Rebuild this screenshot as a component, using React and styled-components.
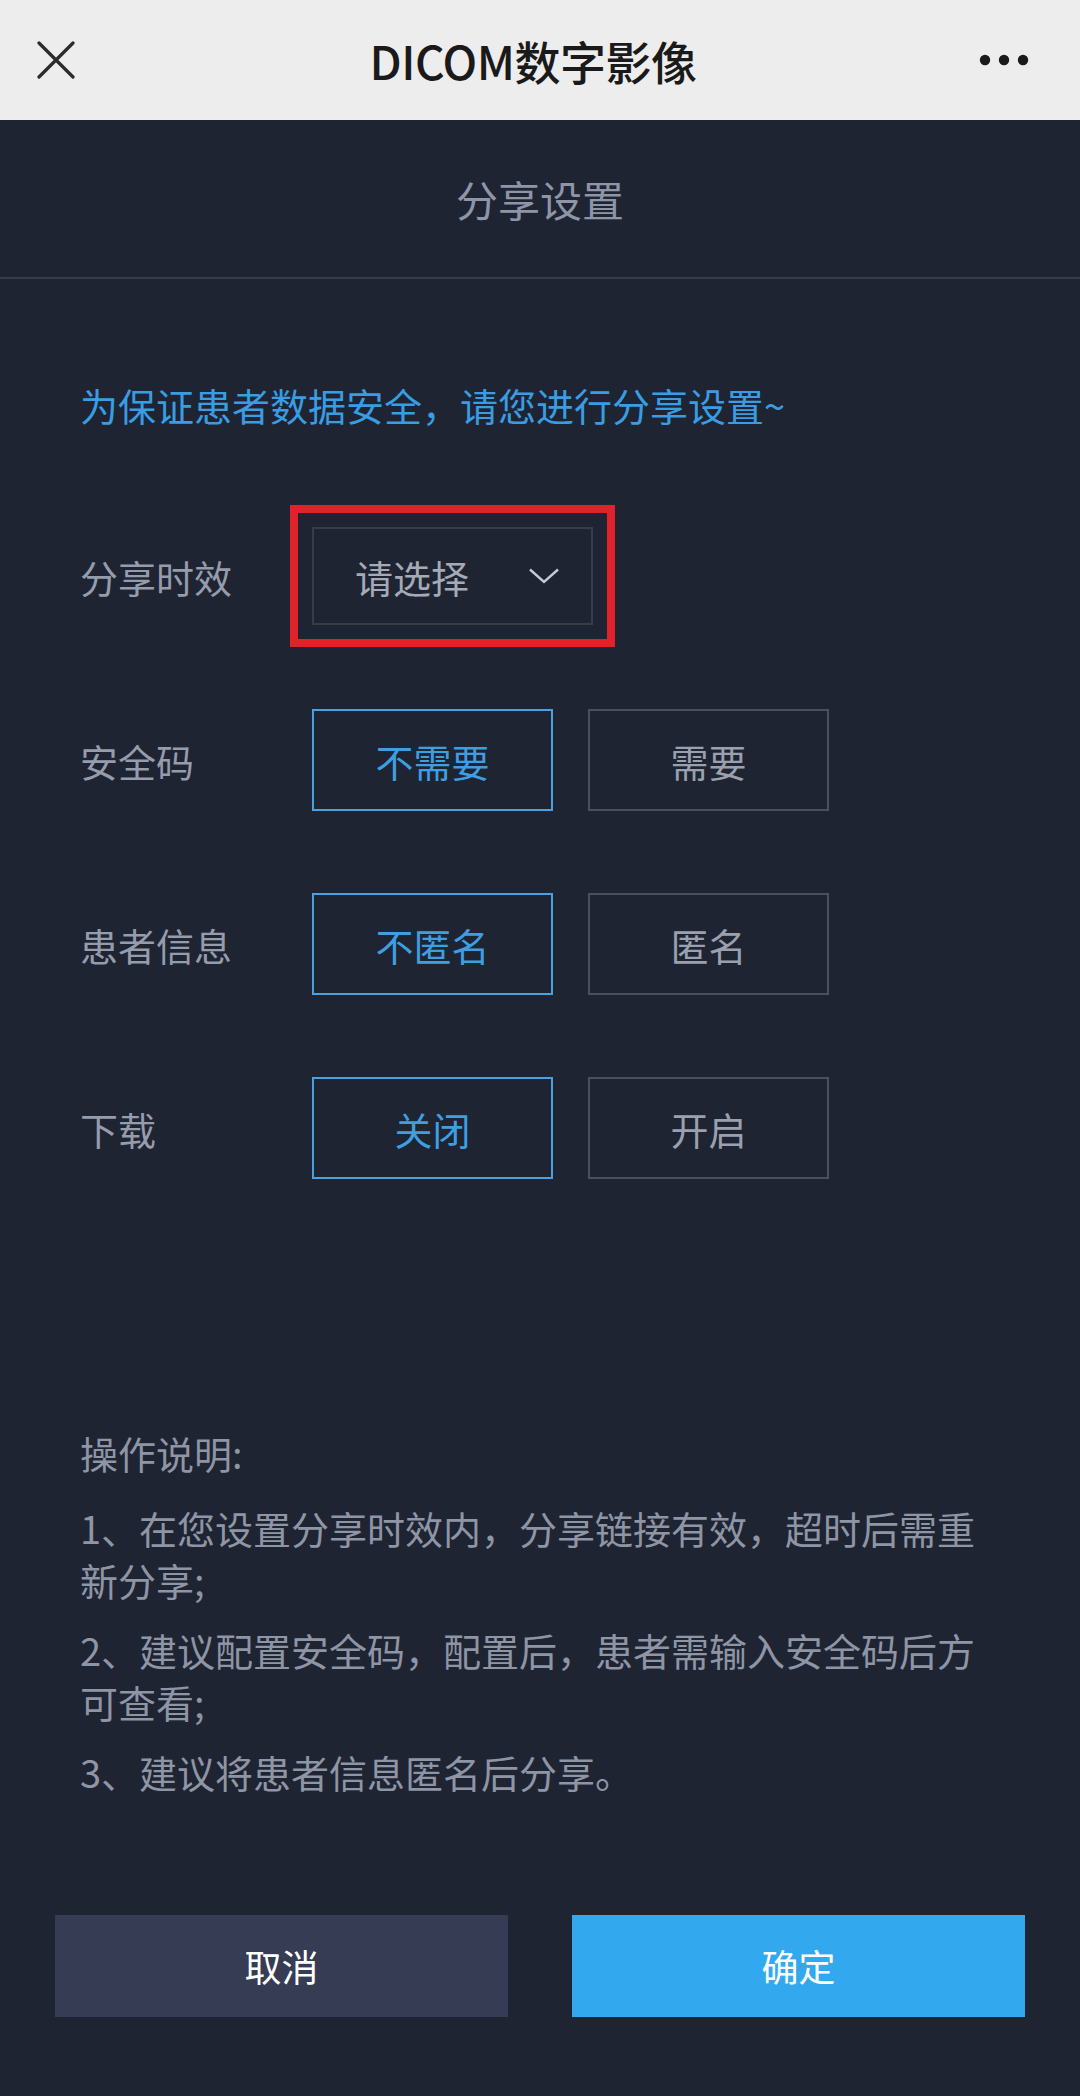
import styled, { createGlobalStyle } from "styled-components";
import { useState } from "react";

const GlobalStyle = createGlobalStyle`
    html, body {
        margin: 0;
        padding: 0;
        background: #1f2433;
    }
    body {
        font-family: "Noto Sans CJK SC", "Noto Sans", sans-serif;
    }
    * {
        box-sizing: border-box;
    }
`;

const Page = styled.div`
    min-height: 100vh;
    display: flex;
    flex-direction: column;
    background: #1f2433;
`;

const NavBar = styled.div`
    height: 120px;
    background: #ededed;
    display: grid;
    grid-template-columns: 1fr auto 1fr;
    align-items: center;
    padding: 0 51px 0 37px;
`;

const NavTitle = styled.div`
    font-size: 46px;
    font-weight: 500;
    color: #1a1a1a;
    letter-spacing: -0.5px;
`;

const NavRight = styled.div`
    display: flex;
    justify-content: flex-end;
`;

const SubHeader = styled.div`
    height: 159px;
    display: flex;
    align-items: center;
    justify-content: center;
    border-bottom: 2px solid #363c4c;
    font-size: 42px;
    color: #8d95a7;
`;

const Content = styled.div`
    padding: 100px 80px 0;
`;

const Intro = styled.p`
    margin: 0 0 94px;
    font-size: 38px;
    line-height: 52px;
    color: #389de2;
`;

const Form = styled.div`
    display: flex;
    flex-direction: column;
    gap: 82px;
`;

const Row = styled.div`
    height: 102px;
    display: flex;
    align-items: center;
`;

const Label = styled.div`
    width: 232px;
    font-size: 38px;
    color: #959cab;
`;

const Select = styled.div`
    width: 281px;
    height: 98px;
    border: 2px solid #353c4a;
    display: flex;
    align-items: center;
    justify-content: space-between;
    padding: 0 32px 0 41px;
    font-size: 38px;
    color: #a4aab6;
    outline: ${(p) => (p.$marked ? "8px solid #e0222b" : "none")};
    outline-offset: 14px;
`;

const Options = styled.div`
    display: flex;
    gap: 35px;
`;

const Option = styled.button`
    width: 241px;
    height: 102px;
    background: transparent;
    border: 2px solid ${(p) => (p.$active ? "#4aa1de" : "#4a505f")};
    color: ${(p) => (p.$active ? "#3d9fe2" : "#9aa0ad")};
    font-family: inherit;
    font-size: 38px;
    cursor: pointer;
    padding: 0;
`;

const Notes = styled.div`
    margin-top: 248px;
    font-size: 38px;
    line-height: 52px;
    color: #8e95a4;
`;

const NoteTitle = styled.div`
    margin-bottom: 23px;
`;

const Note = styled.p`
    margin: 0;

    & + & {
        margin-top: 18px;
    }
`;

const Footer = styled.div`
    margin-top: auto;
    padding: 117px 55px 81px;
    display: flex;
    gap: 64px;
`;

const FooterButton = styled.button`
    flex: 1;
    height: 102px;
    border: none;
    background: ${(p) => (p.$primary ? "#32a9ee" : "#353c53")};
    color: #ffffff;
    font-family: inherit;
    font-size: 37px;
    cursor: pointer;
`;

function CloseIcon() {
    return (
        <svg width="40" height="40" viewBox="0 0 40 40">
            <path
                d="M2 3 L36 37 M36 3 L2 37"
                stroke="#2b2b2b"
                strokeWidth="3.2"
                strokeLinecap="round"
            />
        </svg>
    );
}

function MoreIcon() {
    return (
        <svg width="50" height="12" viewBox="0 0 50 12">
            <circle cx="6" cy="6" r="5.2" fill="#1a1a1a" />
            <circle cx="25" cy="6" r="5.2" fill="#1a1a1a" />
            <circle cx="44" cy="6" r="5.2" fill="#1a1a1a" />
        </svg>
    );
}

function Chevron() {
    return (
        <svg width="30" height="16" viewBox="0 0 30 16">
            <path
                d="M1 1.5 L15 14 L29 1.5"
                fill="none"
                stroke="#c6cad3"
                strokeWidth="2.4"
            />
        </svg>
    );
}

const settings = [
    { key: "code", label: "安全码", options: ["不需要", "需要"] },
    { key: "info", label: "患者信息", options: ["不匿名", "匿名"] },
    { key: "download", label: "下载", options: ["关闭", "开启"] },
];

function App() {
    // 每一列預設選第一個
    const [picked, setPicked] = useState({ code: 0, info: 0, download: 0 });

    return (
        <Page>
            <GlobalStyle />
            <NavBar>
                <CloseIcon />
                <NavTitle>DICOM数字影像</NavTitle>
                <NavRight>
                    <MoreIcon />
                </NavRight>
            </NavBar>
            <SubHeader>分享设置</SubHeader>
            <Content>
                <Intro>为保证患者数据安全，请您进行分享设置~</Intro>
                <Form>
                    <Row>
                        <Label>分享时效</Label>
                        <Select $marked>
                            请选择
                            <Chevron />
                        </Select>
                    </Row>
                    {settings.map((s) => (
                        <Row key={s.key}>
                            <Label>{s.label}</Label>
                            <Options>
                                {s.options.map((opt, i) => (
                                    <Option
                                        key={opt}
                                        $active={picked[s.key] === i}
                                        onClick={() =>
                                            setPicked({ ...picked, [s.key]: i })
                                        }
                                    >
                                        {opt}
                                    </Option>
                                ))}
                            </Options>
                        </Row>
                    ))}
                </Form>
                <Notes>
                    <NoteTitle>操作说明:</NoteTitle>
                    <Note>1、在您设置分享时效内，分享链接有效，超时后需重新分享;</Note>
                    <Note>2、建议配置安全码，配置后，患者需输入安全码后方可查看;</Note>
                    <Note>3、建议将患者信息匿名后分享。</Note>
                </Notes>
            </Content>
            <Footer>
                <FooterButton>取消</FooterButton>
                <FooterButton $primary>确定</FooterButton>
            </Footer>
        </Page>
    );
}

export default App;
